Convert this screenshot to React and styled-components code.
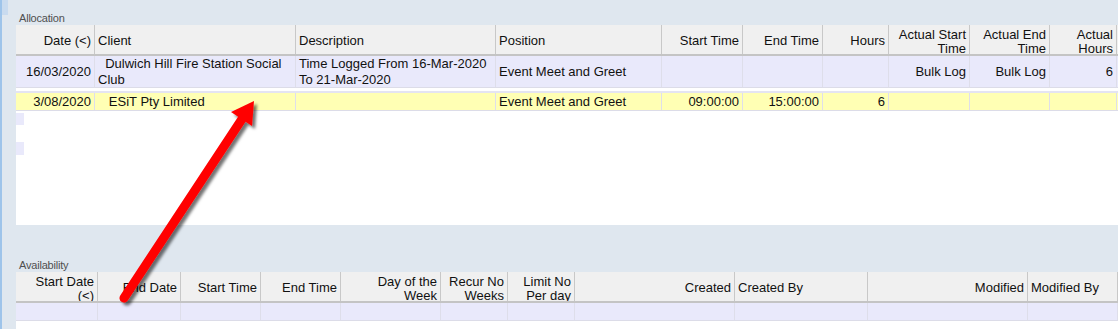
import React from 'react'
import styled, { createGlobalStyle } from 'styled-components'

const GlobalStyle = createGlobalStyle`
  html, body {
    margin: 0;
    padding: 0;
    background: #dfe7ef;
    font-family: "Liberation Sans", Arial, sans-serif;
    font-size: 13px;
    color: #111;
  }
`

const allocCols = '79px 201px 200px 166px 81px 80px 66px 81px 80px 67px'
const availCols = '82px 83px 80px 80px 100px 67px 67px 160px 133px 160px 90px'

const allocHeaders = [
  { t: 'Date (<)', r: true },
  { t: 'Client' },
  { t: 'Description' },
  { t: 'Position' },
  { t: 'Start Time', r: true },
  { t: 'End Time', r: true },
  { t: 'Hours', r: true },
  { t: 'Actual Start Time', r: true, wrap: true },
  { t: 'Actual End Time', r: true, wrap: true },
  { t: 'Actual Hours', r: true, wrap: true },
]

const availHeaders = [
  { t: 'Start Date (<)', r: true, wrap: true },
  { t: 'End Date', r: true },
  { t: 'Start Time', r: true },
  { t: 'End Time', r: true },
  { t: 'Day of the Week', r: true, wrap: true },
  { t: 'Recur No Weeks', r: true, wrap: true },
  { t: 'Limit No Per day', r: true, wrap: true },
  { t: 'Created', r: true },
  { t: 'Created By' },
  { t: 'Modified', r: true },
  { t: 'Modified By' },
]

const allocRows = [
  {
    tone: 'lavender',
    h: 32,
    cells: [
      { t: '16/03/2020', r: true },
      { t: '\u00a0 Dulwich Hill Fire Station Social Club' },
      { t: 'Time Logged From 16-Mar-2020 To 21-Mar-2020' },
      { t: 'Event Meet and Greet' },
      { t: '' },
      { t: '' },
      { t: '' },
      { t: 'Bulk Log', r: true },
      { t: 'Bulk Log', r: true },
      { t: '6', r: true },
    ],
  },
  {
    tone: 'yellow',
    h: 18,
    cells: [
      { t: '3/08/2020', r: true },
      { t: '\u00a0\u00a0 ESiT Pty Limited' },
      { t: '' },
      { t: 'Event Meet and Greet' },
      { t: '09:00:00', r: true },
      { t: '15:00:00', r: true },
      { t: '6', r: true },
      { t: '' },
      { t: '' },
      { t: '' },
    ],
  },
]

const Page = styled.div`
  position: relative;
  width: 1118px;
  height: 329px;
  overflow: hidden;
  box-sizing: border-box;
  border-left: 2px solid #9ec4ea;
  padding-left: 14px;
`

const Corner = styled.div`
  position: absolute;
  left: 0;
  top: 0;
  width: 6px;
  height: 15px;
  background: #c9dbef;
`

const Section = styled.section`
  display: flex;
  flex-direction: column;
  margin-top: ${(p) => p.$top}px;
`

const Label = styled.div`
  height: 14px;
  line-height: 14px;
  padding-left: 3px;
  font-size: 11px;
  color: #505050;
  letter-spacing: -0.2px;
`

const Panel = styled.div`
  background: #fff;
  height: ${(p) => p.$h}px;
  display: flex;
  flex-direction: column;
`

const Grid = styled.div`
  display: grid;
  grid-template-columns: ${(p) => p.$cols};
  height: ${(p) => p.$h}px;
  box-sizing: border-box;
  background: ${(p) =>
    p.$tone === 'header' ? '#f0f0f0' : p.$tone === 'yellow' ? '#ffffb4' : '#e9e9fb'};
  border-bottom: ${(p) =>
    p.$tone === 'header' ? '2px solid #c4c4c4' : '1px solid #dcdce8'};
`

const HeadCell = styled.div`
  display: flex;
  align-items: ${(p) => (p.$wrap ? 'flex-start' : 'center')};
  justify-content: ${(p) => (p.$r ? 'flex-end' : 'flex-start')};
  text-align: ${(p) => (p.$r ? 'right' : 'left')};
  padding: ${(p) => (p.$wrap ? '3px 3px 0' : '2px 3px 0')};
  line-height: ${(p) => (p.$wrap ? 14 : 15)}px;
  overflow: hidden;
  border-right: 1px solid #c8c8c8;
  box-sizing: border-box;
  color: #111;
`

const Cell = styled.div`
  display: flex;
  align-items: center;
  justify-content: ${(p) => (p.$r ? 'flex-end' : 'flex-start')};
  text-align: ${(p) => (p.$r ? 'right' : 'left')};
  padding: 1px 3px 0;
  line-height: 16px;
  overflow: hidden;
  border-right: 1px solid #dedeea;
  box-sizing: border-box;
  white-space: pre-wrap;
  color: #111;
`

const Spacer = styled.div`
  height: 5px;
  box-sizing: border-box;
  border-bottom: 2px solid #e4e4f2;
`

const Stub = styled.div`
  width: 8px;
  height: ${(p) => p.$h}px;
  margin-top: ${(p) => p.$top}px;
  background: #e9e9fb;
`

const Overlay = styled.svg`
  position: absolute;
  left: 0;
  top: 0;
  pointer-events: none;
`

const Header = ({ cols, items }) => (
  <Grid $cols={cols} $h={31} $tone="header">
    {items.map((h, i) => (
      <HeadCell key={i} $r={h.r} $wrap={h.wrap}>
        {h.t}
      </HeadCell>
    ))}
  </Grid>
)

const Row = ({ cols, row }) => (
  <Grid $cols={cols} $h={row.h} $tone={row.tone}>
    {row.cells.map((c, i) => (
      <Cell key={i} $r={c.r}>{c.t}</Cell>
    ))}
  </Grid>
)

const Arrow = () => (
  <Overlay width="1118" height="329" viewBox="0 0 1118 329">
    <defs>
      <filter id="shade" x="-20%" y="-20%" width="140%" height="140%">
        <feDropShadow dx="3" dy="3" stdDeviation="1.6" floodColor="#000" floodOpacity="0.55" />
      </filter>
    </defs>
    <g filter="url(#shade)">
      <line x1="122" y1="298" x2="240" y2="119" stroke="#ff0000" strokeWidth="9" strokeLinecap="round" />
      <polygon points="252,101 250,126 229,112" fill="#ff0000" />
    </g>
  </Overlay>
)

export default function App() {
  return (
    <>
      <GlobalStyle />
      <Page>
        <Corner />
        <Section $top={11}>
          <Label>Allocation</Label>
          <Panel $h={200}>
            <Header cols={allocCols} items={allocHeaders} />
            <Row cols={allocCols} row={allocRows[0]} />
            <Spacer />
            <Row cols={allocCols} row={allocRows[1]} />
            <Stub $top={2} $h={12} />
            <Stub $top={17} $h={13} />
          </Panel>
        </Section>
        <Section $top={33}>
          <Label>Availability</Label>
          <Panel $h={60}>
            <Header cols={availCols} items={availHeaders} />
            <Grid $cols={availCols} $h={18} $tone="lavender">
              {availHeaders.map((_, i) => (
                <Cell key={i} />
              ))}
            </Grid>
          </Panel>
        </Section>
        <Arrow />
      </Page>
    </>
  )
}
